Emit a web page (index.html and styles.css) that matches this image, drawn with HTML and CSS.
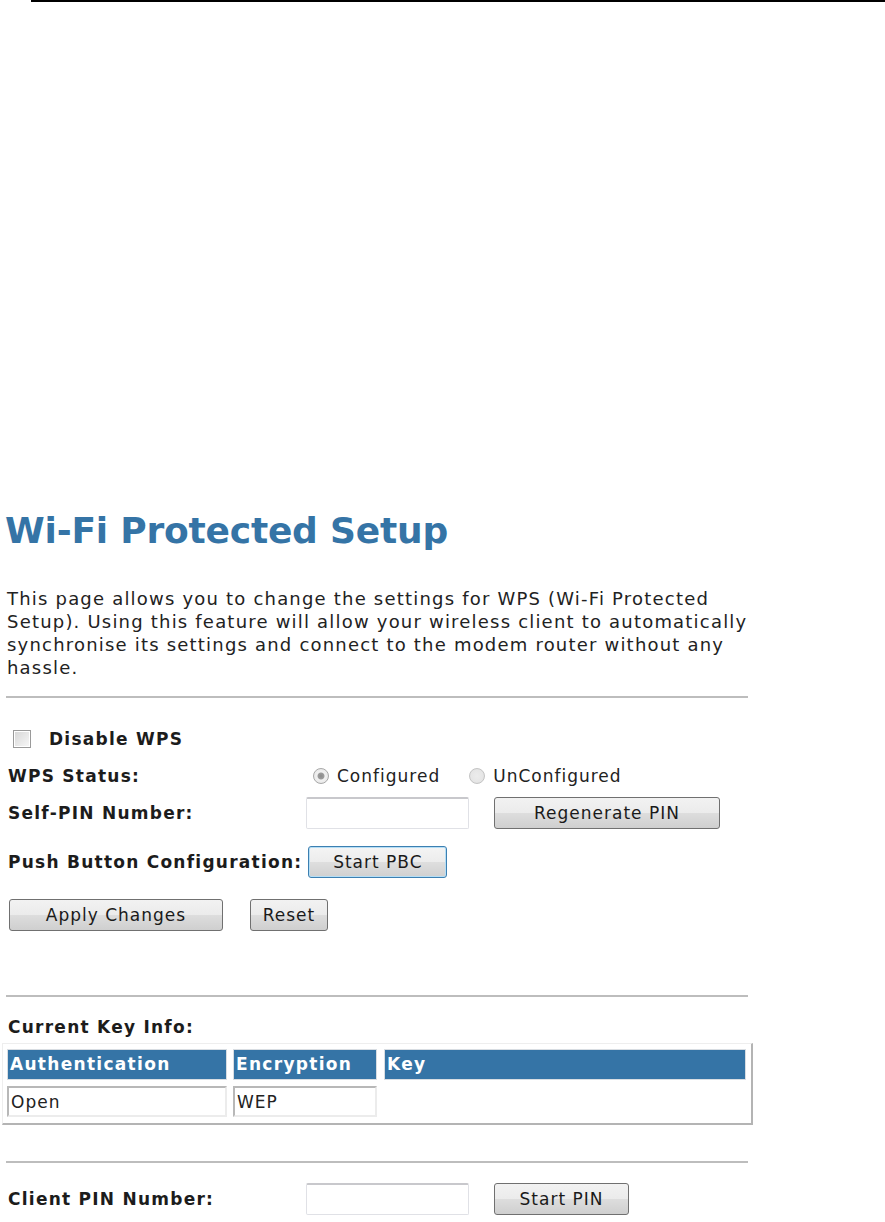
FILE: index.html
```html
<!DOCTYPE html>
<html>
<head>
<meta charset="utf-8">
<link rel="stylesheet" href="styles.css">
</head>
<body>
<div class="topline"></div>
<div class="page">
  <h1 class="title">Wi-Fi Protected Setup</h1>
  <p class="intro">This page allows you to change the settings for WPS (Wi-Fi Protected Setup). Using this feature will allow your wireless client to automatically synchronise its settings and connect to the modem router without any hassle.</p>
  <div class="rule"></div>

  <div class="check-row">
    <span class="checkbox"></span>
    <span class="lbl">Disable WPS</span>
  </div>

  <div class="form-row status-row">
    <span class="lbl col1">WPS Status:</span>
    <span class="radio on"></span><span class="rtext">Configured</span>
    <span class="radio"></span><span class="rtext">UnConfigured</span>
  </div>

  <div class="form-row pin-row">
    <span class="lbl col1">Self-PIN Number:</span>
    <span class="field"></span>
    <span class="btn btn-regen">Regenerate PIN</span>
  </div>

  <div class="form-row pbc-row">
    <span class="lbl">Push Button Configuration:</span>
    <span class="btn btn-pbc">Start PBC</span>
  </div>

  <div class="form-row apply-row">
    <span class="btn btn-apply">Apply Changes</span>
    <span class="btn btn-reset">Reset</span>
  </div>

  <div class="rule rule2"></div>

  <div class="lbl keyinfo">Current Key Info:</div>
  <div class="keytable">
    <div class="kt-row">
      <div class="th c1">Authentication</div>
      <div class="th c2">Encryption</div>
      <div class="th c3">Key</div>
    </div>
    <div class="kt-row">
      <div class="td c1">Open</div>
      <div class="td c2">WEP</div>
    </div>
  </div>

  <div class="rule rule3"></div>

  <div class="form-row client-row">
    <span class="lbl col1">Client PIN Number:</span>
    <span class="field"></span>
    <span class="btn btn-startpin">Start PIN</span>
  </div>
</div>
</body>
</html>
```
FILE: styles.css
```css
html, body {
  margin: 0;
  padding: 0;
  background: #fff;
}
body {
  font-family: "DejaVu Sans", Verdana, sans-serif;
  font-size: 17px;
  letter-spacing: 1px;
  color: #1f1f1f;
}
.topline {
  margin-left: 31px;
  height: 2px;
  background: #000;
}
.page {
  padding-left: 6px;
  width: 746px;
}
.title {
  margin: 504px 0 0 -1px;
  font-size: 36px;
  font-weight: bold;
  color: #3574a6;
  letter-spacing: -0.2px;
  line-height: 50px;
}
.intro {
  margin: 31px 0 0 1px;
  font-size: 18px;
  letter-spacing: 1.2px;
  line-height: 23px;
  color: #222;
  width: 755px;
}
.rule {
  margin-top: 17px;
  height: 2px;
  background: #bdbdbd;
  width: 742px;
}
.lbl {
  font-weight: bold;
  font-size: 17px;
  letter-spacing: 1.25px;
  color: #1c1c1c;
}
.check-row {
  display: flex;
  align-items: center;
  margin-top: 30px;
  height: 22px;
}
.checkbox {
  width: 16px;
  height: 16px;
  margin-left: 7px;
  border: 1px solid #9a9a9a;
  background: linear-gradient(135deg, #d6d6d6, #f8f8f8);
  box-shadow: inset 0 0 0 1px #fff;
  flex: none;
}
.check-row .lbl {
  margin-left: 18px;
}
.form-row {
  display: flex;
  align-items: center;
}
.col1 {
  width: 298px;
  flex: none;
  margin-left: 2px;
}
.status-row {
  margin-top: 15px;
  height: 22px;
}
.radio {
  width: 16px;
  height: 16px;
  border-radius: 50%;
  border: 1px solid #c4c4c4;
  background: radial-gradient(circle, #ececec 0, #e6e6e6 60%, #d8d8d8 100%);
  margin-left: 7px;
  box-sizing: border-box;
  flex: none;
}
.radio.on {
  background: radial-gradient(circle, #8a8a8a 0, #9c9c9c 30%, #f1f1f1 40%, #e2e2e2 100%);
  border-color: #a8a8a8;
}
.rtext {
  margin-left: 8px;
  color: #222;
}
.rtext + .radio {
  margin-left: 29px;
}
.pin-row {
  margin-top: 10px;
  height: 32px;
}
.field {
  width: 163px;
  height: 32px;
  border: 1px solid #e0e1e6;
  border-top: 2px solid #c8c8cc;
  border-radius: 2px;
  box-sizing: border-box;
  background: #fff;
  flex: none;
}
.btn {
  display: inline-flex;
  align-items: center;
  justify-content: center;
  height: 32px;
  box-sizing: border-box;
  border: 1px solid #707070;
  border-radius: 3px;
  background: linear-gradient(#f2f2f2 0%, #ebebeb 50%, #dddddd 51%, #cfcfcf 100%);
  color: #1a1a1a;
  flex: none;
}
.btn-regen {
  width: 226px;
  margin-left: 25px;
}
.pbc-row {
  margin-top: 17px;
  height: 32px;
  margin-left: 2px;
}
.btn-pbc {
  width: 139px;
  margin-left: 6px;
  border-color: #3c7fb1;
  background: linear-gradient(#f4f4f4 0%, #ececec 50%, #dedede 51%, #d0d0d0 100%);
  box-shadow: inset 0 0 0 1px #b5def5;
}
.apply-row {
  margin-top: 21px;
  height: 32px;
}
.btn-apply {
  width: 214px;
  margin-left: 3px;
}
.btn-reset {
  width: 78px;
  margin-left: 27px;
}
.rule2 {
  margin-top: 64px;
}
.keyinfo {
  margin-top: 20px;
  margin-left: 2px;
  height: 20px;
  line-height: 20px;
}
.keytable {
  margin: 6px 0 0 -4px;
  width: 751px;
  box-sizing: border-box;
  border: 1px solid #eeeeee;
  border-right: 2px solid #b4b4b4;
  border-bottom: 2px solid #b4b4b4;
  padding: 5px 5px 6px 4px;
  display: flex;
  flex-direction: column;
  gap: 6px;
}
.kt-row {
  display: flex;
}
.th {
  background: #3574a6;
  color: #fff;
  font-weight: bold;
  letter-spacing: 1.3px;
  height: 31px;
  line-height: 31px;
  padding-left: 3px;
  box-sizing: border-box;
  outline: 1px solid #d8dde2;
  outline-offset: -1px;
}
.c1 { width: 220px; }
.c2 { width: 144px; margin-left: 6px; }
.th.c3 { flex: 1; margin-left: 7px; }
.td {
  height: 31px;
  line-height: 28px;
  padding-left: 2px;
  box-sizing: border-box;
  border: 2px solid #ececec;
  border-top-color: #b8b8b8;
  border-left-color: #b8b8b8;
  color: #222;
}
.rule3 {
  margin-top: 36px;
}
.client-row {
  margin-top: 20px;
  height: 32px;
}
.btn-startpin {
  width: 135px;
  margin-left: 25px;
}
```
